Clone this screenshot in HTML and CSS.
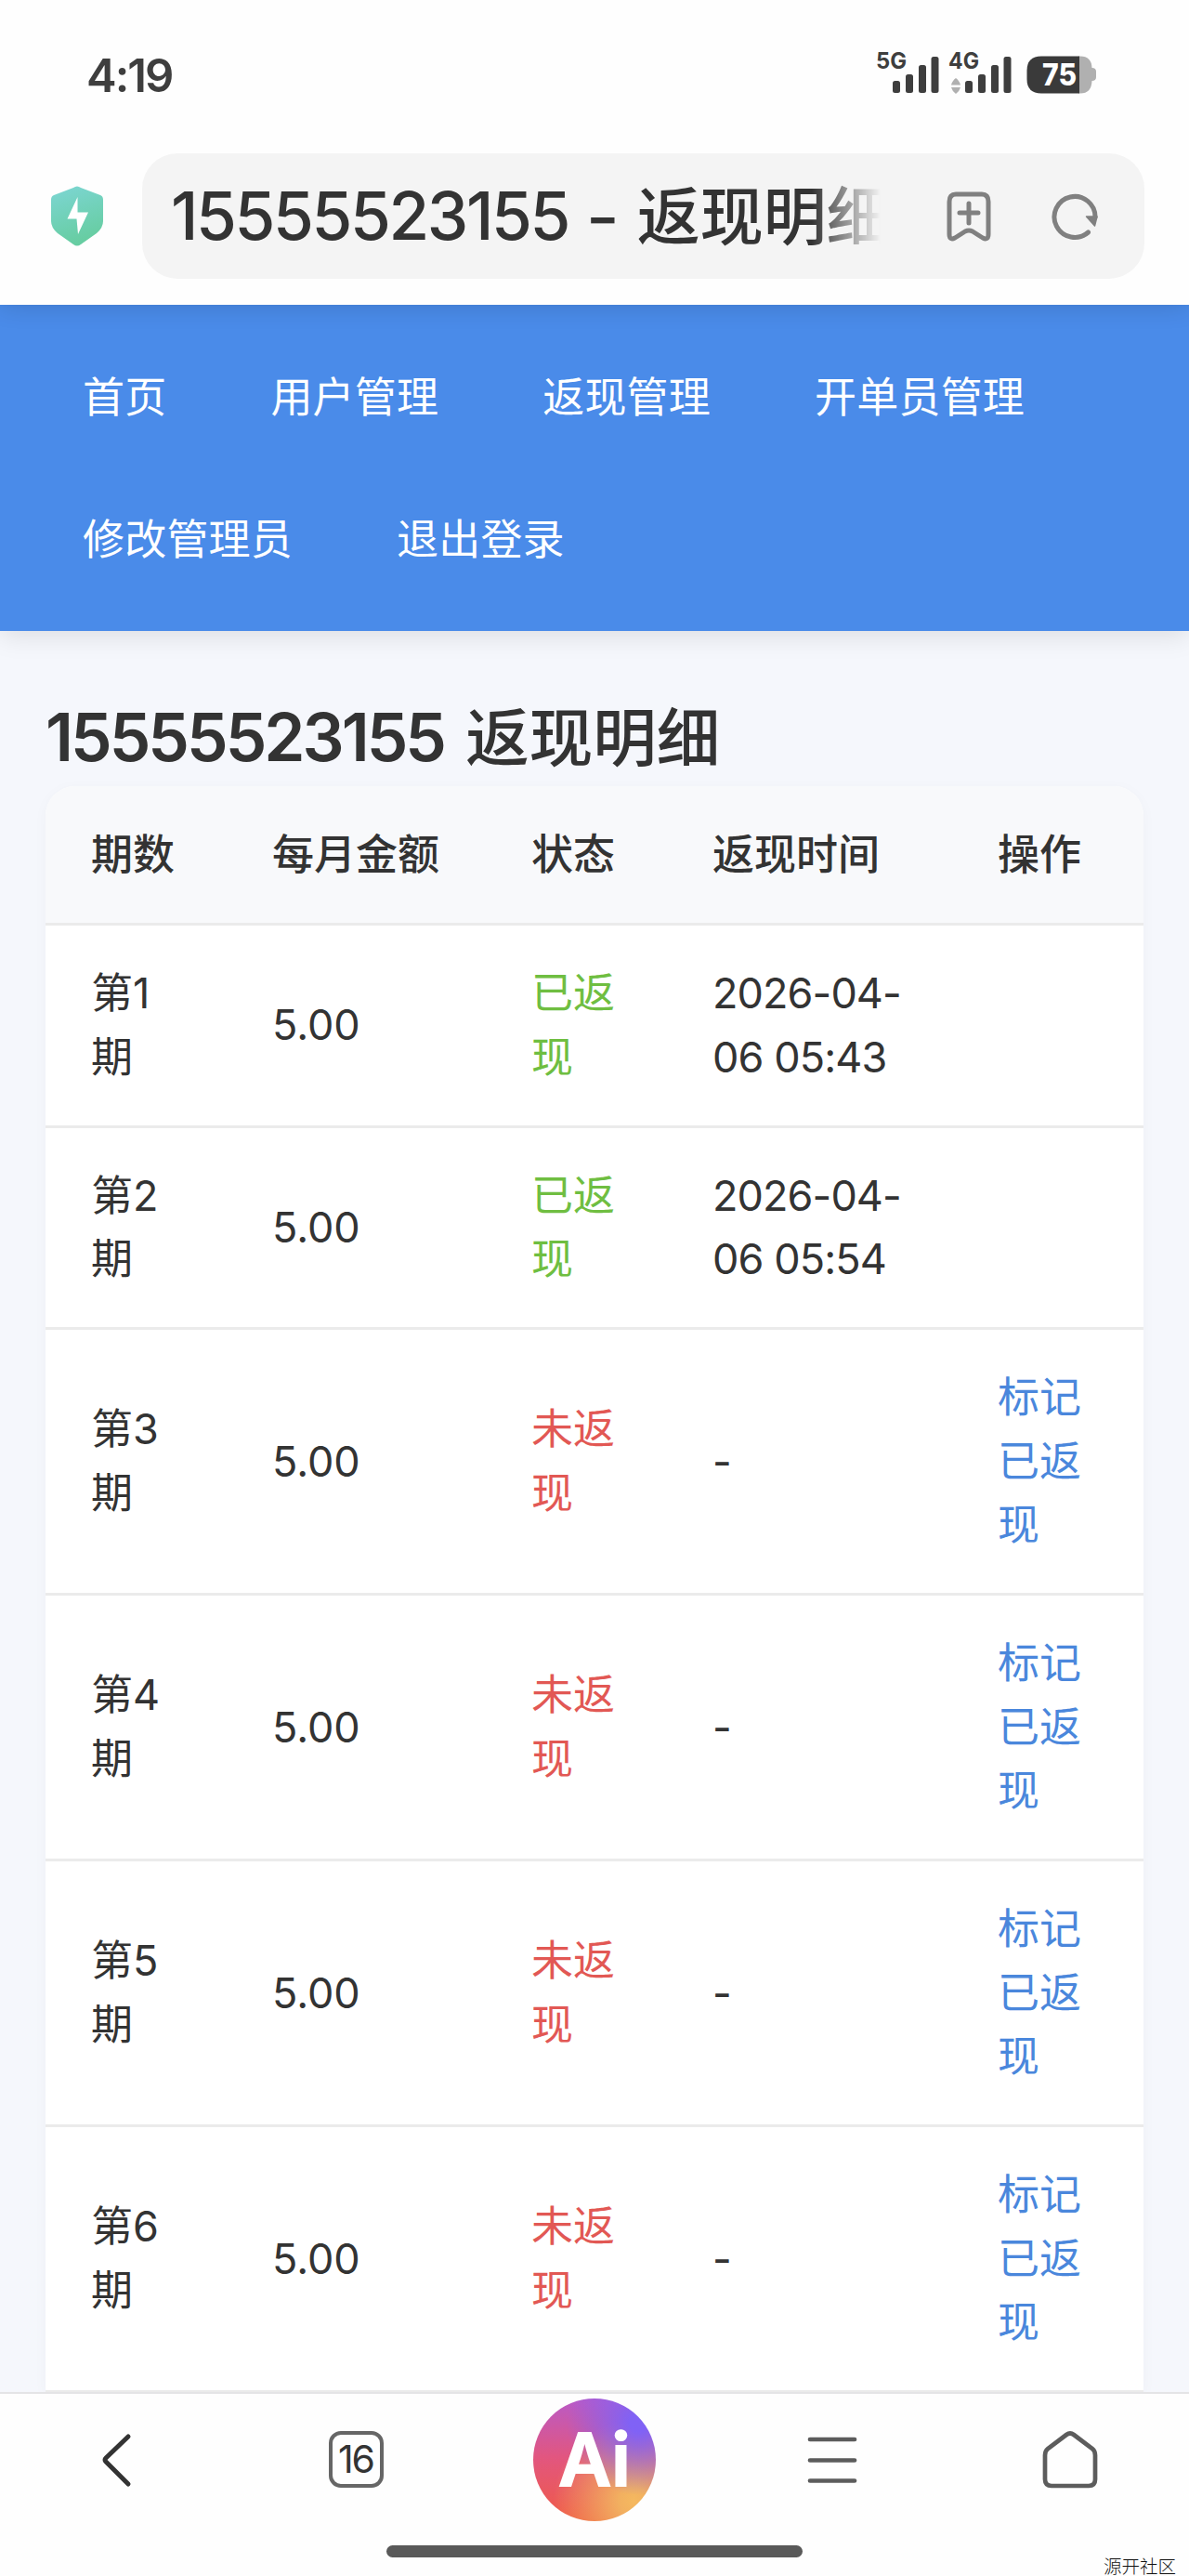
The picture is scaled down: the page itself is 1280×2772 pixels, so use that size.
FILE: index.html
```html
<!DOCTYPE html>
<html lang="zh-CN">
<head>
  <meta charset="UTF-8" />
  <meta name="viewport" content="width=device-width, initial-scale=1.0" />
  <title>15555523155 - 返现明细</title>
  <link rel="stylesheet" href="styles.css">
</head>
<body>
  <header class="browser-top">
    <div class="status-bar">
      <span class="time">4:19</span>
      <!-- signal + battery -->
      <svg class="status-icons" width="240" height="64" viewBox="0 -12 240 64">
        <g fill="#3e3e3e">
          <text x="3" y="20" class="net" textLength="33" lengthAdjust="spacingAndGlyphs">5G</text>
          <rect x="21" y="33" width="8" height="13" rx="2.5"/>
          <rect x="35" y="26" width="8" height="20" rx="2.5"/>
          <rect x="49" y="16" width="8" height="30" rx="2.5"/>
          <rect x="62.500" y="7" width="8" height="39" rx="2.5"/>
          <text x="81" y="20" class="net" textLength="33" lengthAdjust="spacingAndGlyphs">4G</text>
          <rect x="99" y="33" width="8" height="13" rx="2.5"/>
          <rect x="113" y="26" width="8" height="20" rx="2.5"/>
          <rect x="127" y="16" width="8" height="30" rx="2.5"/>
          <rect x="140.500" y="7" width="8" height="39" rx="2.5"/>
        </g>
        <path d="M84 37.500 Q85 33 89 30 Q93 33 94 37.500 Z M84 40 H94 Q93 44 89 47 Q85 44 84 40 Z" fill="#b0b0b0"/>
        <path d="M221 6.500 H223 Q235 6.500 235.500 19 Q240 19 240 23 V29 Q240 33 235.500 33 Q235 46.500 223 46.500 H221 Z" fill="#b0b0b0"/>
        <path d="M222 6.500 H181 Q165.500 6.500 165.500 22 V31 Q165.500 46.500 181 46.500 H222 Z" fill="#3a3a3a"/>
        <text x="182" y="38" class="battery" textLength="37" lengthAdjust="spacingAndGlyphs">75</text>
      </svg>
    </div>
    <div class="address-row">
      <svg class="shield" width="58" height="66" viewBox="0 0 58 66">
        <defs>
          <linearGradient id="shieldFill" x1="0" y1="0" x2="0.3" y2="1">
            <stop offset="0" stop-color="#7dd6d4"/>
            <stop offset="1" stop-color="#67cda2"/>
          </linearGradient>
        </defs>
        <path d="M25 2 Q29 -1 33 2 L54 10 Q57 11 57 15 V38 Q57 45 50 51 L33 63 Q29 66 25 63 L8 51 Q1 45 1 38 V15 Q1 11 4 10 Z" fill="url(#shieldFill)"/>
        <path d="M29.500 12 L18.500 35.500 H28.500 L30 52 L41 28.500 H29.500 Z" fill="#fff"/>
      </svg>
      <div class="address">
        <div class="address-title"><span class="num">15555523155</span> <span class="dash">-</span> 返现明细</div>
        <svg class="bookmark" width="50" height="56" viewBox="0 0 50 56">
          <path d="M11 4 H39 Q46 4 46 12 V47 Q46 54 40 51 L29 44 Q25 42 21 44 L10 51 Q4 54 4 47 V12 Q4 4 11 4 Z M15 24 H35 M25 14 V35"/>
        </svg>
        <svg class="reload" width="50" height="52" viewBox="0 0 50 52">
          <path d="M39.500 43 A22 22 0 1 1 47 27"/>
          <path d="M37.500 26 H49 L46.500 36 Z" fill="#808080" stroke-width="1.500"/>
        </svg>
      </div>
    </div>
  </header>

  <main class="page">
    <nav class="navbar">
      <a href="#">首页</a>
      <a href="#">用户管理</a>
      <a href="#">返现管理</a>
      <a href="#">开单员管理</a>
      <a href="#">修改管理员</a>
      <a href="#">退出登录</a>
    </nav>

    <div class="container">
      <h2><span class="num">15555523155</span> 返现明细</h2>
      <table class="table">
        <colgroup>
          <col class="col-no"><col class="col-money"><col class="col-state"><col class="col-time"><col>
        </colgroup>
        <thead>
          <tr><th>期数</th><th>每月金额</th><th>状态</th><th>返现时间</th><th>操作</th></tr>
        </thead>
        <tbody>
          <tr><td>第1<br>期</td><td>5.00</td><td class="paid">已返现</td><td class="date">2026-04-<br>06 05:43</td><td></td></tr>
          <tr><td>第2<br>期</td><td>5.00</td><td class="paid">已返现</td><td class="date">2026-04-<br>06 05:54</td><td></td></tr>
          <tr><td>第3<br>期</td><td>5.00</td><td class="unpaid">未返现</td><td class="date">-</td><td><a href="#">标记已返现</a></td></tr>
          <tr><td>第4<br>期</td><td>5.00</td><td class="unpaid">未返现</td><td class="date">-</td><td><a href="#">标记已返现</a></td></tr>
          <tr><td>第5<br>期</td><td>5.00</td><td class="unpaid">未返现</td><td class="date">-</td><td><a href="#">标记已返现</a></td></tr>
          <tr><td>第6<br>期</td><td>5.00</td><td class="unpaid">未返现</td><td class="date">-</td><td><a href="#">标记已返现</a></td></tr>
        </tbody>
      </table>
    </div>
  </main>

  <footer class="browser-bottom">
    <div class="toolbar">
      <div class="tool">
        <svg class="back" width="34" height="60" viewBox="0 0 34 60"><path d="M29 5 L5 28 Q3 30 5 32 L29 56"/></svg>
      </div>
      <div class="tool"><span class="tabs">16</span></div>
      <div class="tool"><span class="ai"><span class="ai-text">Ai</span></span></div>
      <div class="tool">
        <svg class="line-icon" width="60" height="62" viewBox="0 0 60 62"><path d="M6 9 H54 M6 31.500 H54 M6 53.500 H54"/></svg>
      </div>
      <div class="tool">
        <svg class="line-icon home" width="60" height="62" viewBox="0 0 60 62"><path d="M26 4 Q30 1 34 4 L54 19 Q57 21.500 57 26 V52 Q57 59 50 59 H10 Q3 59 3 52 V26 Q3 21.500 6 19 Z"/></svg>
      </div>
    </div>
    <div class="home-bar"></div>
    <span class="watermark">源开社区</span>
  </footer>
</body>
</html>
```
FILE: styles.css
```css
* { margin: 0; padding: 0; box-sizing: border-box; }
body {
  width: 1280px;
  height: 2772px;
  display: flex;
  flex-direction: column;
  overflow: hidden;
  font-family: 'Inter', 'Noto Sans CJK SC', sans-serif;
  font-size: 45px;
  line-height: 68.5px;
  color: #333;
  background: #f5f7fc;
}
a { text-decoration: none; }
svg { display: block; flex: none; }

/* browser top */
.browser-top {
  height: 328px;
  flex: none;
  background: #fefefe;
  box-shadow: 0 0 26px rgba(0,0,0,0.16);
  position: relative;
  z-index: 2;
}
.status-bar {
  height: 165px;
  padding: 42px 100px 0 93px;
  display: flex;
  justify-content: space-between;
  align-items: flex-start;
}
.time {
  margin-top: 13px;
  font-size: 49px;
  font-weight: 600;
  line-height: 54px;
  letter-spacing: -2px;
  color: #3e3e3e;
}
.net { font: 700 24px 'Inter', sans-serif; }
.battery { font: 800 33px 'Inter', sans-serif; fill: #fff; }
.address-row {
  display: flex;
  align-items: center;
  padding: 0 48px 0 54px;
}
.address {
  width: 1079px;
  height: 135px;
  margin-left: 41px;
  padding: 0 45px 0 31px;
  border-radius: 38px;
  background: #f4f4f4;
  display: flex;
  align-items: center;
}
.address-title {
  width: 767px;
  flex: none;
  overflow: hidden;
  white-space: nowrap;
  font-size: 68px;
  font-weight: 500;
  line-height: 100px;
  -webkit-mask-image: linear-gradient(90deg, #000 690px, transparent 764px);
  mask-image: linear-gradient(90deg, #000 690px, transparent 764px);
}
.num { font-size: 71px; font-weight: 450; letter-spacing: -2.4px; }
.dash { display: inline-block; transform: scaleX(1.15); margin: 0 3px; }
.bookmark { margin-left: 67px; }
.reload { margin-left: 64px; }
.bookmark, .reload {
  fill: none;
  stroke: #808080;
  stroke-width: 5;
  stroke-linecap: round;
  stroke-linejoin: round;
}

/* page */
.page { flex: 1; min-height: 0; overflow: hidden; }
.navbar {
  height: 351px;
  padding: 23px 88px 22px 89px;
  display: flex;
  flex-wrap: wrap;
  align-content: flex-start;
  column-gap: 112px;
  background: #4a8be9;
  box-shadow: 0 6px 26px rgba(0,0,0,0.1);
}
.navbar a { color: #fff; line-height: 153px; letter-spacing: 0.2px; }
.container { padding: 63px 49px 0; }
h2 {
  font-size: 68.5px;
  font-weight: 500;
  line-height: 103px;
  white-space: nowrap;
}
h2 .num { font-weight: 600; letter-spacing: -3px; margin-right: 5px; }
.table {
  width: 1182px;
  table-layout: fixed;
  border-collapse: separate;
  border-spacing: 0;
  background: #fff;
  border-radius: 32px 32px 0 0;
  overflow: hidden;
  box-shadow: 0 3px 16px rgba(0,0,0,0.03);
}
.col-no { width: 195px; }
.col-money { width: 279px; }
.col-state { width: 195px; }
.col-time { width: 307px; }
th, td {
  padding: 39px 49px 38.5px;
  border-bottom: 3px solid #ebebeb;
  text-align: left;
  vertical-align: middle;
}
th {
  height: 150px;
  font-weight: 500;
  white-space: nowrap;
  background: #f8f9fb;
}
.date { white-space: nowrap; letter-spacing: -0.9px; }
.paid { color: #6fbe41; }
.unpaid { color: #e25854; }
td a { color: #4a87dc; }

/* browser bottom */
.browser-bottom {
  height: 198px;
  flex: none;
  border-top: 2px solid #e4e4e6;
  background: #fefefe;
  position: relative;
}
.toolbar { display: flex; height: 141px; }
.tool {
  flex: 1;
  display: flex;
  align-items: center;
  justify-content: center;
}
.back {
  margin-right: 4px;
  fill: none;
  stroke: #333;
  stroke-width: 5;
  stroke-linecap: round;
}
.line-icon {
  fill: none;
  stroke: #5c5c5c;
  stroke-width: 4.7;
  stroke-linecap: round;
}
.tabs {
  width: 59px;
  height: 61px;
  margin-right: 2px;
  border: 4.5px solid #666;
  border-radius: 13px;
  font-size: 41px;
  letter-spacing: -2px;
  line-height: 52px;
  display: flex;
  justify-content: center;
}
.ai {
  width: 132px;
  height: 132px;
  margin-top: 1px;
  border-radius: 50%;
  display: flex;
  align-items: center;
  justify-content: center;
  background:
    radial-gradient(circle at 86% 20%, #8062f5 0, #8062f5 6%, rgba(128,98,245,0) 50%),
    radial-gradient(circle at 82% 84%, #f5b95f 0, #f2b060 10%, rgba(240,160,90,0) 56%),
    linear-gradient(180deg, #b95ac8 0%, #e2567f 48%, #f05a45 100%);
}
.ai-text {
  font-size: 78px;
  font-weight: 600;
  line-height: 130px;
  color: #fff;
  -webkit-text-stroke: 2px #fff;
}
.home-bar {
  width: 448px;
  height: 13px;
  margin: 22px auto 0;
  border-radius: 7px;
  background: #595959;
}
.watermark {
  position: absolute;
  right: 14px;
  bottom: 0;
  font-family: 'Noto Sans CJK SC', sans-serif;
  font-size: 19.5px;
  font-weight: 300;
  line-height: 22px;
  color: #111;
}
```
